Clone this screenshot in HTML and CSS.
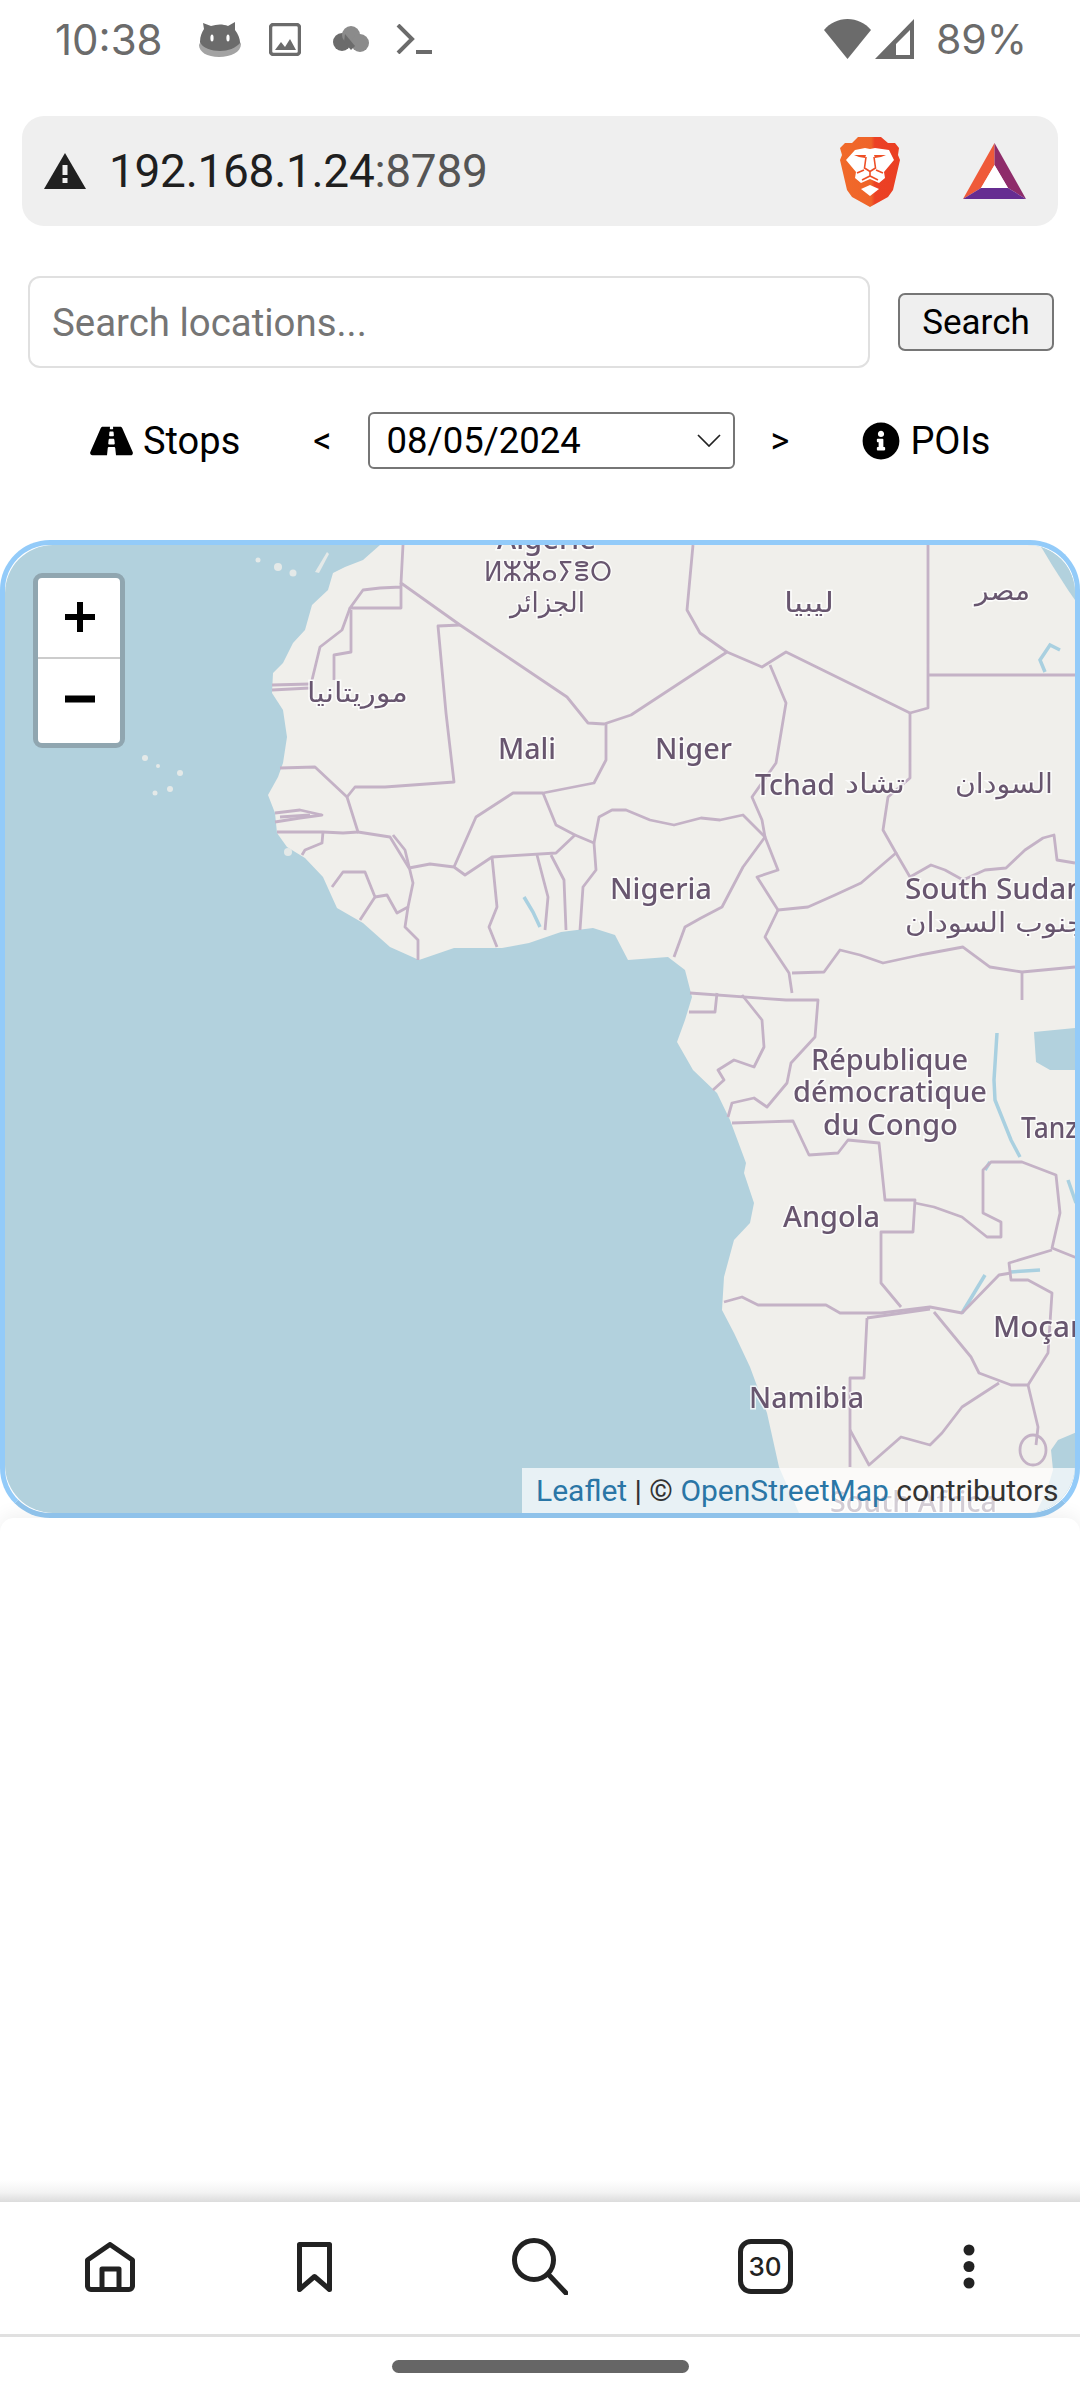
FILE: index.html
```html
<!DOCTYPE html>
<html lang="en">
<head>
<meta charset="utf-8">
<title>Map</title>
<link rel="stylesheet" href="styles.css">
</head>
<body>
<div class="app">
  <header class="status">
    <span class="time">10:38</span>
    <div class="status-icons">
      <svg class="si-cat" viewBox="0 0 42 35"><path class="g2" d="M0 23c0 7 8 12 20 12s22-5 22-13l-3-6H3z"/><path class="g1" d="M1 20C1 14 3 10 5 7L4 1l8 3c6-2 12-2 17 0l7-4 0 8c3 4 5 8 5 13-4 5-12 8-20 8S3 26 1 20z"/><ellipse class="hole" cx="13" cy="16" rx="1.6" ry="3.5"/><ellipse class="hole" cx="29" cy="16" rx="1.6" ry="3.5"/></svg>
      <svg class="si-img" viewBox="0 0 32 33"><rect class="si-line" x="1.5" y="1.5" width="29" height="30" rx="3"/><path class="g1" d="M6 27l6-8 4 5 5-8 6 11z"/></svg>
      <svg class="si-cloud" viewBox="0 0 36 26"><circle class="g1" cx="9" cy="16" r="9"/><circle class="g3" cx="18" cy="9" r="9"/><circle class="g3" cx="27" cy="17" r="9"/><path class="g1" d="M12 8l10 12-4 4-7-8z"/></svg>
      <svg class="si-term" viewBox="0 0 36 30"><path class="si-stroke" d="M2 1l14 14L2 29"/><path class="si-stroke" d="M20 28h16"/></svg>
    </div>
    <div class="status-right">
      <svg class="si-wifi" viewBox="0 0 47 40"><path class="g1" d="M0 11C6 4 14 0 23.5 0S41 4 47 11L23.500 40z"/></svg>
      <svg class="si-signal" viewBox="0 0 39 40"><path class="g1" fill-rule="evenodd" d="M39 0v40H0zM35 11L21 25v11h14z"/></svg>
      <span class="battery">89%</span>
    </div>
  </header>

  <div class="urlbar">
    <svg class="warn" viewBox="0 0 42 36"><path class="warn-tri" d="M21 0l21 36H0z"/><rect class="warn-mark" x="18.500" y="12" width="5" height="10"/><rect class="warn-mark" x="18.500" y="25" width="5" height="5"/></svg>
    <span class="url">192.168.1.24<span class="port">:8789</span></span>
    <svg class="brave" viewBox="0 0 60 71">
      <defs><linearGradient id="bg1" x1="0" x2="1" y1="0" y2="0"><stop offset="0" stop-color="#f16a2a"/><stop offset=".52" stop-color="#ef6429"/><stop offset=".58" stop-color="#ec4125"/><stop offset="1" stop-color="#ea3f23"/></linearGradient></defs>
      <path fill="url(#bg1)" d="M18 1h23l7 6h7l4 5-1 7 2 5-7 30-5 7-18 10-18-10-5-7L0 24l2-5-2-7 5-5h7z"/>
      <path class="brave-w" d="M15 14l10-2 5 1 5-1 14 2 5 10-10 12 1 6-6 5-9-4-9 4-6-5 1-6L6 24z"/>
      <path class="brave-o" d="M14 19h12l-1 3-6-1zM46 19H34l1 3 6-1z"/>
      <path class="brave-l" d="M26 21l-1.500 11 5.500 3.500 5.500-3.500L34 21M17 37l7-3M43 37l-7-3M30 36v4M22 44l8-4 8 4"/>
      <path class="brave-w" d="M21 53l9-4 9 4-9 7z"/>
    </svg>
    <svg class="bat" viewBox="0 0 63 56"><path fill="#ef5a39" d="M31.500 0v22L18 45 0 56z"/><path fill="#8e2c6a" d="M31.500 0L63 56 45 45 31.500 22z"/><path fill="#662d91" d="M0 56l18-11h27l18 11z"/><path fill="#fff" d="M31.500 22L45 45H18z"/></svg>
  </div>

  <form class="search-row">
    <input class="search-input" type="text" placeholder="Search locations...">
    <button class="search-btn" type="button">Search</button>
  </form>

  <div class="controls">
    <span class="ctl ctl-stops"><svg class="ic-road" viewBox="0 0 576 512"><path d="M573.19 402.67l-139.79-320C428.43 71.29 417.6 64 405.68 64h-97.59l2.45 23.16c.5 4.72-3.21 8.84-7.96 8.84h-29.16c-4.75 0-8.46-4.12-7.96-8.84L267.91 64h-97.59c-11.93 0-22.76 7.29-27.73 18.67L2.8 402.67C-6.45 423.86 8.31 448 30.54 448h196.84l10.31-97.68c.86-8.14 7.72-14.32 15.91-14.32h68.8c8.19 0 15.05 6.18 15.91 14.32L348.62 448h196.84c22.23 0 36.99-24.14 27.73-45.33zM260.4 135.16a8 8 0 0 1 7.96-7.16h39.29c4.09 0 7.53 3.09 7.96 7.16l4.6 43.58c.75 7.09-4.81 13.26-11.93 13.26h-40.54c-7.13 0-12.68-6.17-11.93-13.26l4.6-43.58zM315.64 304h-55.29c-9.5 0-16.91-8.23-15.91-17.68l5.07-48c.86-8.14 7.72-14.32 15.91-14.32h45.15c8.19 0 15.05 6.18 15.91 14.32l5.07 48c1 9.45-6.41 17.68-15.91 17.68z"/></svg>Stops</span>
    <span class="ctl ctl-prev">&lt;</span>
    <div class="date-select"><span>08/05/2024</span><svg class="chev" viewBox="0 0 24 13"><path d="M1 1l11 11L23 1"/></svg></div>
    <span class="ctl ctl-next">&gt;</span>
    <span class="ctl ctl-pois"><svg class="ic-info" viewBox="0 0 512 512"><path d="M256 8C119.043 8 8 119.083 8 256c0 136.997 111.043 248 248 248s248-111.003 248-248C504 119.083 392.957 8 256 8zm0 110c23.196 0 42 18.804 42 42s-18.804 42-42 42-42-18.804-42-42 18.804-42 42-42zm56 254c0 6.627-5.373 12-12 12h-88c-6.627 0-12-5.373-12-12v-24c0-6.627 5.373-12 12-12h12v-64h-12c-6.627 0-12-5.373-12-12v-24c0-6.627 5.373-12 12-12h64c6.627 0 12 5.373 12 12v100h12c6.627 0 12 5.373 12 12v24z"/></svg>POIs</span>
  </div>

  <section class="map">
    <div class="map-view">
      <svg class="tiles" viewBox="5 545 1070 968">
        <rect class="sea" x="5" y="545" width="1070" height="968"/>
        <g class="soft">
        <path class="land" d="M380 545L363 560 345 567 333 573 328 590 312 605 305 630 293 643 283 663 273 673 272 693 283 710 287 737 283 763 278 777 268 795 275 813 277 833 287 847 305 858 323 877 332 897 337 908 363 923 390 947 419 960 454 948 502 948 529 943 561 932 593 928 615 935 628 960 668 957 685 970 692 997 685 1020 677 1042 693 1070 717 1093 730 1120 746 1163 744 1173 754 1203 750 1223 734 1240 724 1277 722 1310 734 1333 750 1367 767 1413 779 1467 799 1513 1075 1513 1075 545z"/>
        <path class="sea" d="M1040 545L1052 565 1068 590 1075 600V545z"/>
        <path class="sea" d="M1077 1432L1058 1440 1051 1450 1053 1470 1047 1490 1036 1513H1077z"/>
        <path class="sea" d="M1034 1032L1075 1028V1070H1050L1036 1062z"/>
        <g class="islands">
          <circle cx="258" cy="560" r="2.500"/><circle cx="278" cy="567" r="4"/><circle cx="293" cy="573" r="3.500"/><path d="M315 572l12-20 2 2-10 19z"/><circle cx="145" cy="758" r="3"/><circle cx="158" cy="766" r="2"/><circle cx="180" cy="773" r="3"/><circle cx="170" cy="789" r="3"/><circle cx="155" cy="793" r="2.500"/><circle cx="288" cy="852" r="4"/>
        </g>
        <g class="water">
          <path d="M997 1033L994 1080 995 1100 1011 1140 1020 1157"/>
          <path d="M1068 1180L1076 1203"/>
          <path d="M524 897L533 912 540 927"/>
          <path d="M1045 672L1040 660 1050 645 1060 650"/>
          <path d="M985 1275L962 1313"/>
          <path d="M1011 1272L1040 1270"/>
          <path d="M985 1170L990 1162"/>
        </g>
        <g class="borders">
          <path d="M403 545L401 583 460 625 567 697 588 723 604 724 631 715 727 652 762 667 786 652 910 713 928 708V545"/>
          <path d="M401 587L380 588 363 590 350 608H401V583"/>
          <path d="M350 608L342 630 320 647 312 680"/>
          <path d="M272 685L310 684"/><path d="M272 690L310 688"/>
          <path d="M351 610V652L334 655V680"/>
          <path d="M460 625L438 626 446 713 454 782 385 787 355 787 347 797 315 767 280 768"/>
          <path d="M606 724V760L594 783 543 793 513 793 476 817 454 867"/>
          <path d="M347 797L358 832 390 837 409 868 430 864 454 867 465 875 492 857 556 853 575 835 556 825 543 793"/>
          <path d="M492 857L497 907 489 927 497 947"/>
          <path d="M537 855L548 897 545 930"/>
          <path d="M551 855L564 880 566 930"/>
          <path d="M575 835L594 843 596 870 583 887 580 930"/>
          <path d="M594 843L599 817 612 810 626 810 650 820 674 825 701 818 720 820 743 815 765 837 743 867 722 907 701 918 685 927 674 957"/>
          <path d="M928 675H1075"/>
          <path d="M693 545L687 610 700 633 727 652"/>
          <path d="M770 665L786 703 776 763 752 797 762 820 765 837 778 870 757 877 778 910 808 907 835 895 861 883 896 853 883 830 888 797 910 778V713"/>
          <path d="M778 910L765 937 789 973 792 993"/>
          <path d="M896 853L910 877 931 865 945 870 963 880 985 870 1006 868 1025 850 1043 838 1054 835 1057 860 1075 863"/>
          <path d="M792 973L824 972 840 950 860 955 883 963 920 955 963 947 990 967 1022 972 1075 967"/>
          <path d="M1022 972V1000"/>
          <path d="M690 993L786 1000 818 1000 815 1037 791 1063 787 1083 767 1107 754 1098 732 1103 728 1117"/>
          <path d="M689 1012H715L717 993"/><path d="M742 995L762 1020 764 1047 754 1067 734 1060 718 1070 724 1080 713 1090"/>
          <path d="M732 1123L793 1121 809 1155 838 1153 848 1140 879 1143 885 1200H915L913 1232H881V1283L901 1307"/>
          <path d="M915 1203L934 1207 962 1217 987 1237H1001V1222L983 1213V1170L991 1162H1022L1056 1175 1060 1213 1052 1248 1077 1258"/>
          <path d="M724 1302L742 1297 758 1305H826L840 1313H881L930 1307 962 1313 999 1275 1011 1273"/>
          <path d="M867 1318L930 1309"/>
          <path d="M867 1318L864 1378H850V1467"/>
          <path d="M934 1312L971 1357 979 1373 1011 1385H1028L1048 1353 1052 1293 1028 1280H1011L1009 1263 1052 1250"/>
          <path d="M999 1383L962 1407 942 1433 930 1445 901 1437 869 1465 850 1430"/>
          <path d="M1028 1385L1038 1427 1036 1445"/>
          <path d="M1020 1450a13 15 0 1 0 26 0 13 15 0 1 0-26 0"/>
          <path d="M275 813L300 810 322 815 300 818 275 822"/><path d="M280 817L310 815"/>
          <path d="M277 832H323L343 833 358 832"/>
          <path d="M323 832L322 843 305 850 302 855"/>
          <path d="M332 887L343 872H365L375 897 360 920"/>
          <path d="M375 897L387 895 397 913 408 907 413 883 405 850 393 835"/>
          <path d="M408 907L405 927 418 940V960"/>
        </g>
        </g>
        <g class="labels">
          <text class="lbl" x="497" y="549" textLength="99" lengthAdjust="spacingAndGlyphs">Algérie</text>
          <text class="lbl lbl-t" x="484" y="581" textLength="128" lengthAdjust="spacingAndGlyphs">ⵍⵣⵣⴰⵢⴻⵔ</text>
          <text class="lbl lbl-a" x="510" y="612" textLength="75" lengthAdjust="spacingAndGlyphs">الجزائر</text>
          <text class="lbl lbl-a" x="784" y="612" textLength="50" lengthAdjust="spacingAndGlyphs">ليبيا</text>
          <text class="lbl lbl-a" x="975" y="600" textLength="55" lengthAdjust="spacingAndGlyphs">مصر</text>
          <text class="lbl lbl-a" x="307" y="702" textLength="101" lengthAdjust="spacingAndGlyphs">موريتانيا</text>
          <text class="lbl" x="498" y="759" textLength="58" lengthAdjust="spacingAndGlyphs">Mali</text>
          <text class="lbl" x="655" y="759" textLength="77" lengthAdjust="spacingAndGlyphs">Niger</text>
          <text class="lbl" x="755" y="795" textLength="80" lengthAdjust="spacingAndGlyphs">Tchad</text>
          <text class="lbl lbl-a" x="845" y="793" textLength="60" lengthAdjust="spacingAndGlyphs">تشاد</text>
          <text class="lbl lbl-a" x="955" y="793" textLength="98" lengthAdjust="spacingAndGlyphs">السودان</text>
          <text class="lbl" x="610" y="899" textLength="102" lengthAdjust="spacingAndGlyphs">Nigeria</text>
          <text class="lbl" x="905" y="899" textLength="180" lengthAdjust="spacingAndGlyphs">South Sudan</text>
          <text class="lbl lbl-a" x="905" y="932" textLength="180" lengthAdjust="spacingAndGlyphs">جنوب السودان</text>
          <text class="lbl" x="811" y="1070" textLength="157" lengthAdjust="spacingAndGlyphs">République</text>
          <text class="lbl" x="793" y="1102" textLength="194" lengthAdjust="spacingAndGlyphs">démocratique</text>
          <text class="lbl" x="823" y="1135" textLength="135" lengthAdjust="spacingAndGlyphs">du Congo</text>
          <text class="lbl" x="1021" y="1138" textLength="72" lengthAdjust="spacingAndGlyphs">Tanza</text>
          <text class="lbl" x="783" y="1227" textLength="97" lengthAdjust="spacingAndGlyphs">Angola</text>
          <text class="lbl" x="993" y="1337" textLength="105" lengthAdjust="spacingAndGlyphs">Moçam</text>
          <text class="lbl" x="749" y="1408" textLength="115" lengthAdjust="spacingAndGlyphs">Namibia</text>
          <text class="lbl" x="830" y="1512" textLength="167" lengthAdjust="spacingAndGlyphs">South Africa</text>
        </g>
      </svg>
      <div class="zoom-ctl">
        <a class="zoom-btn zoom-in"><svg viewBox="0 0 30 30"><path d="M12 0h6v12h12v6H18v12h-6V18H0v-6h12z"/></svg></a>
        <a class="zoom-btn"><svg viewBox="0 0 30 30"><path d="M0 11.500h30v7H0z"/></svg></a>
      </div>
      <div class="attrib"><a>Leaflet</a> | © <a>OpenStreetMap</a> contributors</div>
    </div>
  </section>

  <main class="sheet"></main>
  <div class="nav-shadow"></div>

  <nav class="bottom-nav">
    <svg class="n-home" viewBox="0 0 50 50"><path class="n-line" d="M2.500 18L25 2.500 47.500 18V44a3.500 3.500 0 0 1-3.500 3.500H6A3.500 3.500 0 0 1 2.500 44zM17 47.500V27h17v20.500"/></svg>
    <svg class="n-book" viewBox="0 0 35 50"><path class="n-line" d="M2.500 2.500h30v45l-15-13-15 13z"/></svg>
    <svg class="n-search" viewBox="0 0 56 57"><circle class="n-line" cx="22" cy="22" r="19.500"/><path class="n-line" d="M36 36l18 19"/></svg>
    <div class="n-tabs">30</div>
    <svg class="n-more" viewBox="0 0 12 45"><circle cx="6" cy="6" r="5.500"/><circle cx="6" cy="22.500" r="5.500"/><circle cx="6" cy="39" r="5.500"/></svg>
  </nav>
  <footer class="gesture"><span class="gesture-bar"></span></footer>
</div>
</body>
</html>
```

FILE: styles.css
```css
* { box-sizing: border-box; }
html, body { margin: 0; padding: 0; background: #fff; }
body { font-family: Roboto, "Liberation Sans", sans-serif; color: #000; }
.app { width: 1080px; height: 2400px; display: flex; flex-direction: column; overflow: hidden; }

.status { height: 78px; margin-bottom: 38px; padding: 0 53px 0 55px; display: flex; align-items: center; color: #6b6b6b; font-family: Inter, Roboto, sans-serif; }
.time { font-size: 42px; font-weight: 400; }
.battery { font-size: 41px; font-weight: 400; }
.status-icons { display: flex; align-items: center; margin-left: 36px; }
.status-right { margin-left: auto; display: flex; align-items: center; }
.g1 { fill: #6b6b6b; }
.g2 { fill: #a3a3a3; }
.g3 { fill: #8b8b8b; }
.hole { fill: #fff; }
.si-cat { width: 42px; height: 35px; }
.si-img { width: 32px; height: 33px; margin-left: 28px; }
.si-line { fill: none; stroke: #6b6b6b; stroke-width: 3.500; }
.si-cloud { width: 36px; height: 26px; margin-left: 32px; }
.si-term { width: 36px; height: 30px; margin-left: 27px; }
.si-stroke { fill: none; stroke: #6b6b6b; stroke-width: 4; }
.si-wifi { width: 47px; height: 40px; }
.si-signal { width: 39px; height: 40px; margin-left: 4px; }
.battery { margin-left: 22px; }

.urlbar { height: 110px; margin: 0 22px; padding: 0 32px 0 22px; background: #efefef; border-radius: 22px; display: flex; align-items: center; }
.warn { width: 42px; height: 36px; }
.warn-tri { fill: #202020; }
.warn-mark { fill: #efefef; }
.url { margin-left: 23px; font-size: 46px; letter-spacing: -.3px; color: #1f1f1f; }
.port { color: #555; }
.brave { width: 60px; height: 71px; margin-left: auto; }
.brave-w { fill: #fff; }
.brave-o { fill: #ee4f26; }
.brave-l { fill: none; stroke: #ee4f26; stroke-width: 1.600; }
.bat { width: 63px; height: 56px; margin-left: 63px; }

.search-row { margin: 50px 26px 0 28px; display: flex; align-items: center; justify-content: space-between; }
.search-input { width: 842px; height: 92px; padding: 0 22px; border: 2.500px solid #e0e0e0; border-radius: 12px; outline: 0; background: #fff; font: 38.400px Roboto, sans-serif; color: #000; }
.search-input::placeholder { color: #757575; opacity: 1; }
.search-btn { width: 156px; height: 58px; padding: 0; background: #efefef; border: 2.500px solid #767676; border-radius: 7px; font: 35px Roboto, sans-serif; color: #000; }

.controls { height: 57px; margin-top: 44px; padding-left: 90px; display: flex; align-items: center; font-size: 38px; }
.ctl { display: inline-flex; align-items: center; }
.ic-road { width: 43px; height: 38px; margin-right: 10px; }
.ctl-prev { margin-left: 73px; font-size: 36px; }
.date-select { width: 367px; height: 57px; margin-left: 36px; padding: 0 12px 0 17px; border: 2.500px solid #767676; border-radius: 6px; display: flex; align-items: center; justify-content: space-between; font-size: 36.500px; }
.chev { width: 24px; height: 13px; }
.chev path { fill: none; stroke: #222; stroke-width: 1.700; }
.ctl-next { margin-left: 36px; font-size: 36px; }
.ic-info { width: 38px; height: 38px; margin-right: 10px; }
.ctl-pois { margin-left: 73px; }

.map { height: 978px; margin-top: 71px; position: relative; z-index: 1; background: #fff; border: 5px solid #93cbf9; border-bottom-color: #8fc2ea; border-radius: 50px; }
.map-view { position: relative; height: 100%; overflow: hidden; border-radius: 48px; }
.tiles { display: block; width: 1070px; height: 968px; }
.soft { filter: blur(.7px); }
.sea { fill: #b2d1dd; }
.land { fill: #f0efeb; }
.islands { fill: #e4e9e8; }
.water { fill: none; stroke: #a9d0e0; stroke-width: 3.500; }
.borders { fill: none; stroke: #c4b2c6; stroke-width: 2.800; stroke-linejoin: round; }
.labels { filter: blur(.6px); }
.lbl { font-family: "Noto Sans", "DejaVu Sans", sans-serif; font-size: 28px; font-weight: 500; fill: #68566f; stroke: rgba(255,255,255,.75); stroke-width: 3px; paint-order: stroke; }
.lbl-a { font-family: "DejaVu Sans", sans-serif; font-size: 27px; }
.lbl-t { font-family: "DejaVu Sans", sans-serif; font-size: 28px; }

.zoom-ctl { position: absolute; left: 28px; top: 28px; width: 92px; height: 175px; border: 5px solid #90a6b0; border-radius: 9px; background: #fff; overflow: hidden; }
.zoom-btn { height: 80px; display: flex; align-items: center; justify-content: center; padding-left: 2px; }
.zoom-btn svg { width: 30px; height: 30px; }
.zoom-in { height: 81px; border-bottom: 2px solid #ccc; padding-bottom: 2px; }
.attrib { position: absolute; right: 0; bottom: 0; height: 45px; width: 553px; padding-left: 14px; display: flex; align-items: center; gap: 0; white-space: pre; background: rgba(255,255,255,.7); font-size: 30px; color: #333; }
.attrib a { color: #2a76a6; }

.sheet { flex: 1; background: #fff; border-radius: 14px 14px 0 0; box-shadow: 0 -4px 18px rgba(0,0,0,.06); }
.nav-shadow { height: 22px; background: linear-gradient(#fff, #f3f3f3 55%, #dcdcdc); }

.bottom-nav { height: 135px; display: grid; grid-template-columns: 220px 188px 264px 186px 222px; align-items: center; justify-items: center; padding-bottom: 3px; border-bottom: 3px solid #e0e0e0; }
.n-line { fill: none; stroke: #222; stroke-width: 5; stroke-linejoin: round; stroke-linecap: round; }
.n-home { width: 50px; height: 50px; }
.n-book { width: 35px; height: 50px; }
.n-search { width: 56px; height: 57px; }
.n-tabs { width: 55px; height: 55px; border: 5px solid #222; border-radius: 13px; display: flex; align-items: center; justify-content: center; font: 500 26px Inter, Roboto, sans-serif; color: #222; }
.n-more { width: 12px; height: 45px; fill: #222; }

.gesture { height: 63px; display: flex; justify-content: center; padding-top: 23px; }
.gesture-bar { width: 297px; height: 13px; border-radius: 7px; background: #666; }
```
